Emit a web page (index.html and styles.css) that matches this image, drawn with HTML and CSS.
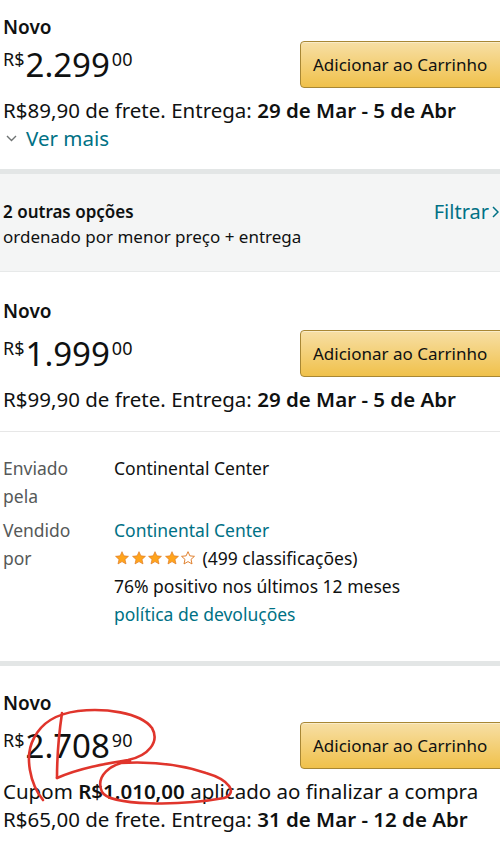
FILE: index.html
```html
<!DOCTYPE html>
<html lang="pt-BR">
<head>
  <meta charset="UTF-8" />
  <meta name="viewport" content="width=device-width, initial-scale=1.0"/>
  <title>Outras opções de compra</title>
  <link rel="stylesheet" href="styles.css">
</head>
<body>

  <!-- oferta principal -->
  <section class="offer offer-first">
    <div class="condition">Novo</div>
    <div class="price-row">
      <div class="price"><span class="cur">R$</span><span class="whole">2.299</span><span class="frac">00</span></div>
      <button class="cart-btn">Adicionar ao Carrinho</button>
    </div>
    <p class="ship">R$89,90 de frete. Entrega: <b>29 de Mar - 5 de Abr</b></p>
    <a class="more" href="#">
      <svg class="chev-down" width="11" height="7" viewBox="0 0 11 7"><polyline points="1,1 5.5,5.5 10,1" fill="none" stroke="#6f7373" stroke-width="1.4"/></svg>
      Ver mais
    </a>
  </section>

  <div class="sep"></div>

  <!-- outras opcoes -->
  <div class="options">
    <div>
      <div class="options-title">2 outras opções</div>
      <div class="options-sub">ordenado por menor preço + entrega</div>
    </div>
    <a class="filter" href="#">Filtrar
      <svg width="7" height="12" viewBox="0 0 7 12"><polyline points="1,1 6,6 1,11" fill="none" stroke="#007185" stroke-width="1.5"/></svg>
    </a>
  </div>

  <section class="offer">
    <div class="condition">Novo</div>
    <div class="price-row">
      <div class="price"><span class="cur">R$</span><span class="whole">1.999</span><span class="frac">00</span></div>
      <button class="cart-btn">Adicionar ao Carrinho</button>
    </div>
    <p class="ship">R$99,90 de frete. Entrega: <b>29 de Mar - 5 de Abr</b></p>
  </section>

  <div class="divider"></div>

  <div class="seller">
    <div class="label">Enviado pela</div>
    <div class="value">Continental Center</div>

    <div class="label">Vendido por</div>
    <div class="value">
      <a class="link" href="#">Continental Center</a>
      <div class="rating">
        <span class="stars">
          <svg viewBox="0 0 24 24"><path d="M12 2.5l2.8 6.3 6.9.7-5.2 4.6 1.5 6.8L12 17.4l-6 3.5 1.5-6.8-5.2-4.6 6.9-.7z" fill="#ffa41c" stroke="#de7921" stroke-width="1"/></svg>
          <svg viewBox="0 0 24 24"><path d="M12 2.5l2.8 6.3 6.9.7-5.2 4.6 1.5 6.8L12 17.4l-6 3.5 1.5-6.8-5.2-4.6 6.9-.7z" fill="#ffa41c" stroke="#de7921" stroke-width="1"/></svg>
          <svg viewBox="0 0 24 24"><path d="M12 2.5l2.8 6.3 6.9.7-5.2 4.6 1.5 6.8L12 17.4l-6 3.5 1.5-6.8-5.2-4.6 6.9-.7z" fill="#ffa41c" stroke="#de7921" stroke-width="1"/></svg>
          <svg viewBox="0 0 24 24"><path d="M12 2.5l2.8 6.3 6.9.7-5.2 4.6 1.5 6.8L12 17.4l-6 3.5 1.5-6.8-5.2-4.6 6.9-.7z" fill="#ffa41c" stroke="#de7921" stroke-width="1"/></svg>
          <svg viewBox="0 0 24 24"><path d="M12 2.5l2.8 6.3 6.9.7-5.2 4.6 1.5 6.8L12 17.4l-6 3.5 1.5-6.8-5.2-4.6 6.9-.7z" fill="none" stroke="#de7921" stroke-width="1.4"/></svg>
        </span>
        (499 classificações)
      </div>
      <div>76% positivo nos últimos 12 meses</div>
      <a class="link" href="#">política de devoluções</a>
    </div>
  </div>

  <div class="sep"></div>

  <section class="offer offer-last">
    <div class="condition">Novo</div>
    <div class="price-row">
      <div class="price"><span class="cur">R$</span><span class="whole">2.708</span><span class="frac">90</span></div>
      <button class="cart-btn">Adicionar ao Carrinho</button>
    </div>
    <p class="ship">Cupom <b>R$1.010,00</b> aplicado ao finalizar a compra</p>
    <p class="ship ship-tight">R$65,00 de frete. Entrega: <b>31 de Mar - 12 de Abr</b></p>
  </section>

  <!-- marcacao a caneta por cima do print -->
  <svg class="ink" width="500" height="850" viewBox="0 0 500 850">
    <path d="M43 800 C30 784, 24 756, 34 738 C42 722, 56 714, 78 711 C104 708, 140 712, 152 728 C160 742, 148 756, 128 760 C104 764, 80 768, 57 778"/>
    <path d="M62 713 C58 740, 57 760, 57 778"/>
    <path d="M130 761 C110 764, 95 776, 102 792 C110 806, 180 806, 224 798 C238 793, 230 780, 206 773 C182 765, 152 761, 120 763"/>
  </svg>

</body>
</html>
```

FILE: styles.css
```css
body {
  margin: 0;
  padding: 0;
  font-family: "Noto Sans", "Open Sans", sans-serif;
  color: #0f1111;
  background: #fff;
  overflow-x: hidden;
  position: relative;
}

p {
  margin: 0;
}

a {
  text-decoration: none;
}

b {
  font-weight: 600;
}

.offer {
  padding: 28px 0 0 3px;
}

.offer-first {
  padding-top: 16px;
  padding-bottom: 17px;
}

.offer-last {
  padding-top: 26px;
}

.condition {
  font-size: 19px;
  font-weight: 600;
  line-height: 22px;
}

.price-row {
  display: flex;
  justify-content: space-between;
  align-items: center;
  margin-top: 8px;
}

.offer-first .price-row {
  margin-top: 3px;
}

.price {
  display: flex;
  align-items: flex-start;
  line-height: 1;
}

.price .cur {
  font-size: 18px;
  margin-top: 2px;
  margin-right: 1px;
}

.price .whole {
  font-size: 33px;
}

.price .frac {
  font-size: 18px;
  margin-top: 2px;
  margin-left: 2px;
}

.cart-btn {
  width: 204px;
  height: 47px;
  margin-right: -4px;
  padding: 0 0 0 12px;
  text-align: left;
  font-family: inherit;
  font-size: 17px;
  color: #0f1111;
  border: 1px solid #a88734;
  border-radius: 4px;
  background: linear-gradient(to bottom, #f7dfa5, #f0c14b);
  box-shadow: inset 0 1px 0 rgba(255, 255, 255, 0.4);
}

.ship {
  font-size: 20.5px;
  line-height: 28px;
  margin-top: 8px;
}

.ship-tight {
  margin-top: 0;
}

.more {
  display: flex;
  align-items: center;
  font-size: 20.5px;
  line-height: 28px;
  color: #007185;
}

.chev-down {
  margin: 0 9px 0 3px;
}

.sep {
  height: 5px;
  background: #e3e6e6;
}

.options {
  display: flex;
  justify-content: space-between;
  padding: 25px 0 22px 3px;
  background: #f4f5f5;
  border-bottom: 1px solid #e7e9e9;
}

.options-title {
  font-size: 17px;
  font-weight: 600;
  line-height: 25px;
}

.options-sub {
  font-size: 17px;
  line-height: 25px;
}

.filter {
  display: flex;
  align-items: center;
  gap: 3px;
  height: 25px;
  margin-right: 1px;
  font-size: 20px;
  color: #007185;
}

.divider {
  height: 1px;
  margin: 18px 0 0 0;
  background: #e7e7e7;
}

.seller {
  display: grid;
  grid-template-columns: 111px 1fr;
  row-gap: 6px;
  padding: 22px 0 33px 3px;
  font-size: 17.5px;
  line-height: 28px;
}

.seller .label {
  color: #565959;
  width: 70px;
}

.link {
  color: #007185;
}

.rating {
  display: flex;
  align-items: center;
}

.stars {
  display: flex;
  margin-right: 6px;
}

.stars svg {
  width: 16px;
  height: 16px;
  margin-right: 0.5px;
}

.ink {
  position: absolute;
  top: 0;
  left: 0;
  pointer-events: none;
}

.ink path {
  fill: none;
  stroke: #e0352c;
  stroke-width: 2.6;
  stroke-linecap: round;
}
```
